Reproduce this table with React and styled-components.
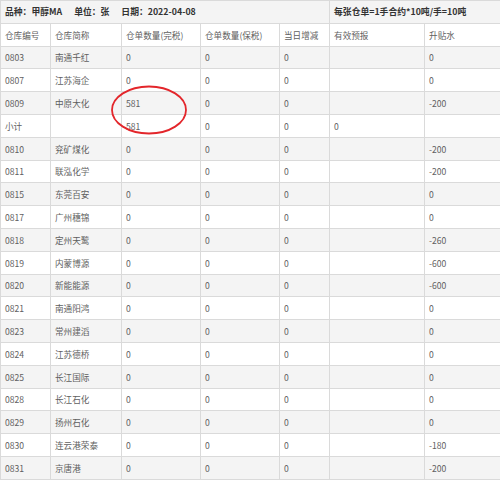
import React from "react";
import styled, { createGlobalStyle } from "styled-components";

const GlobalStyle = createGlobalStyle`
  html, body {
    margin: 0;
    padding: 0;
    background: #fff;
  }
  body {
    font-family: "Noto Sans CJK SC", "Noto Sans", sans-serif;
  }
`;

const cols = [50, 71, 79, 79, 50, 95, 76];
const heads = ["仓库编号", "仓库简称", "仓单数量(完税)", "仓单数量(保税)", "当日增减", "有效预报", "升贴水"];

const rows = [
  ["0803", "南通千红", "0", "0", "0", "", "0"],
  ["0807", "江苏海企", "0", "0", "0", "", "0"],
  ["0809", "中原大化", "581", "0", "0", "", "-200"],
  ["小计", "", "581", "0", "0", "0", ""],
  ["0810", "兖矿煤化", "0", "0", "0", "", "-200"],
  ["0811", "联泓化学", "0", "0", "0", "", "-200"],
  ["0815", "东莞百安", "0", "0", "0", "", "0"],
  ["0817", "广州穗锦", "0", "0", "0", "", "0"],
  ["0818", "定州天鹭", "0", "0", "0", "", "-260"],
  ["0819", "内蒙博源", "0", "0", "0", "", "-600"],
  ["0820", "新能能源", "0", "0", "0", "", "-600"],
  ["0821", "南通阳鸿", "0", "0", "0", "", "0"],
  ["0823", "常州建滔", "0", "0", "0", "", "0"],
  ["0824", "江苏德桥", "0", "0", "0", "", "0"],
  ["0825", "长江国际", "0", "0", "0", "", "0"],
  ["0828", "长江石化", "0", "0", "0", "", "0"],
  ["0829", "扬州石化", "0", "0", "0", "", "0"],
  ["0830", "连云港荣泰", "0", "0", "0", "", "-180"],
  ["0831", "京唐港", "0", "0", "0", "", "-200"],
];

const App = () => {
  return (
    <Page>
      <GlobalStyle />
      <Sheet>
        <colgroup>
          {cols.map((w, i) => (
            <col key={i} style={{ width: w }} />
          ))}
        </colgroup>
        <tbody>
          <Row shaded>
            <TitleCell colSpan={5}>
              <span>品种：甲醇MA</span>
              <span>单位：张</span>
              <span>日期：2022-04-08</span>
            </TitleCell>
            <TitleCell colSpan={2}>每张仓单=1手合约*10吨/手=10吨</TitleCell>
          </Row>
          <Row>
            {heads.map((h) => (
              <Cell key={h}>{h}</Cell>
            ))}
          </Row>
          {rows.map((r, i) => (
            <Row key={i} shaded={i % 2 === 0}>
              {r.map((v, j) => (
                <Cell key={j}>{v}</Cell>
              ))}
            </Row>
          ))}
        </tbody>
      </Sheet>
      <Circle width="80" height="52" viewBox="0 0 80 52">
        <ellipse cx="40" cy="26" rx="37" ry="23.5" fill="none" stroke="#e3262b" strokeWidth="1.8" />
      </Circle>
    </Page>
  );
};

export default App;

const Page = styled.div`
  position: relative;
  width: 500px;
  height: 481px;
  overflow: hidden;
`;

const Sheet = styled.table`
  width: 500px;
  table-layout: fixed;
  border-collapse: collapse;
  border: 1px solid #dadada;
`;

const Row = styled.tr`
  height: 22.8px;
  background: ${(props) => (props.shaded ? "#f4f4f4" : "#ffffff")};
`;

const Cell = styled.td`
  border: 1px solid #dadada;
  padding: 0 0 0 4px;
  font-size: 8.6px;
  color: #5f5f5f;
  white-space: nowrap;
  overflow: hidden;
  vertical-align: middle;
`;

const TitleCell = styled(Cell)`
  font-weight: bold;
  font-size: 8.8px;
  color: #333;

  span {
    margin-right: 12px;
  }
`;

const Circle = styled.svg`
  position: absolute;
  left: 109px;
  top: 84px;
`;
